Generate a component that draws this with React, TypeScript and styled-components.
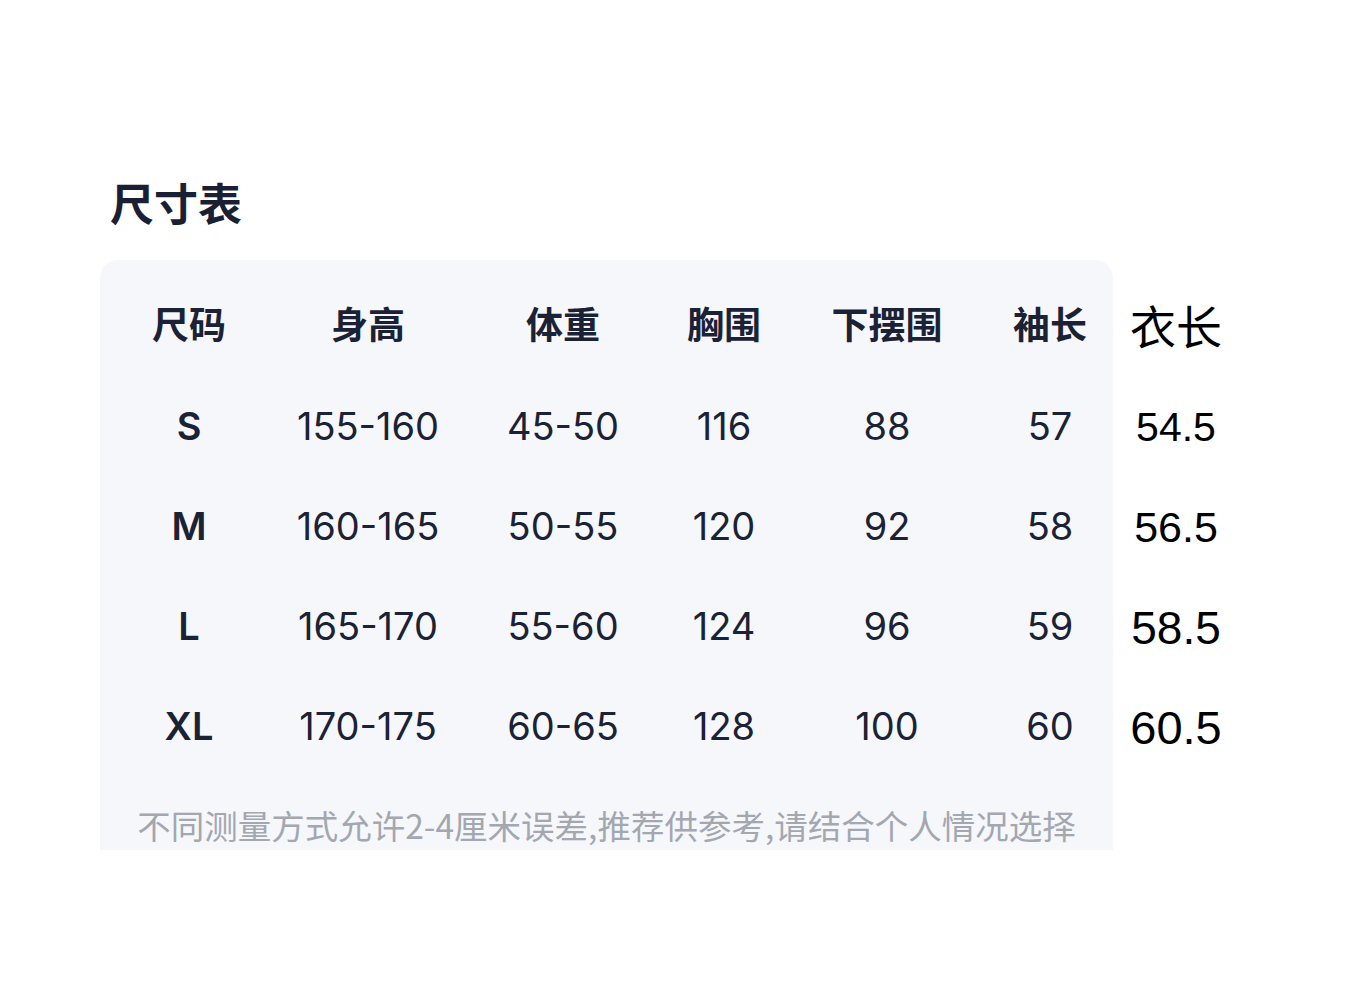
import React from "react";
import styled, { createGlobalStyle } from "styled-components";

const Global = createGlobalStyle`
  html, body { margin: 0; padding: 0; background: #ffffff; }
  body { font-family: "Noto Sans CJK SC", "Noto Sans", sans-serif; }
`;

const Page = styled.div`
  padding: 176px 0 0 100px;
  width: 1360px;
  height: 1004px;
  box-sizing: border-box;
`;

const Title = styled.h1`
  margin: 0 0 32px 10px;
  font-size: 44px;
  line-height: 52px;
  font-weight: 600;
  color: #1a1f33;
  font-family: "Noto Sans CJK SC", sans-serif;
`;

const Chart = styled.div`
  display: flex;
  align-items: flex-start;
`;

const Card = styled.div`
  width: 1013px;
  background: #f5f7fa;
  border-radius: 18px 18px 0 0;
  padding: 13px 0 5px;
  box-sizing: border-box;
`;

const Grid = styled.div`
  display: grid;
  grid-template-columns: 178px 180px 210px 112px 214px 112px;
  grid-auto-rows: 100px;
`;

const Cell = styled.div<{ $head?: boolean; $bold?: boolean }>`
  display: flex;
  align-items: center;
  justify-content: center;
  white-space: nowrap;
  box-sizing: border-box;
  padding-top: ${(p) => (p.$head ? 0 : 5)}px;
  color: #1c2235;
  font-family: "Inter", "Noto Sans CJK SC", sans-serif;
  font-size: ${(p) => (p.$head ? "37px" : "38px")};
  font-weight: ${(p) => (p.$head || p.$bold ? 600 : 400)};
`;

const Note = styled.div`
  margin-top: 32px;
  line-height: 40px;
  text-align: center;
  font-size: 33.5px;
  color: #a3a7b0;
  white-space: nowrap;
  font-family: "Noto Sans CJK SC", sans-serif;
`;

const Extra = styled.div`
  width: 126px;
  padding-top: 14px;
  display: flex;
  flex-direction: column;
`;

const ExtraCell = styled.div<{ $size: number; $num?: boolean }>`
  height: 100px;
  box-sizing: border-box;
  padding-top: ${(p) => (p.$num ? 7 : 0)}px;
  display: flex;
  align-items: center;
  justify-content: center;
  color: #000000;
  font-family: "Liberation Sans", "Noto Sans CJK SC", sans-serif;
  font-size: ${(p) => p.$size}px;
`;

const headers = ["尺码", "身高", "体重", "胸围", "下摆围", "袖长"];
const rows = [
  ["S", "155-160", "45-50", "116", "88", "57"],
  ["M", "160-165", "50-55", "120", "92", "58"],
  ["L", "165-170", "55-60", "124", "96", "59"],
  ["XL", "170-175", "60-65", "128", "100", "60"],
];
const extra: { t: string; s: number }[] = [
  { t: "衣长", s: 46 },
  { t: "54.5", s: 41 },
  { t: "56.5", s: 43 },
  { t: "58.5", s: 46 },
  { t: "60.5", s: 47 },
];

export default function App() {
  return (
    <>
      <Global />
      <Page>
        <Title>尺寸表</Title>
        <Chart>
          <Card>
            <Grid>
              {headers.map((h) => (
                <Cell key={h} $head>
                  {h}
                </Cell>
              ))}
              {rows.map((r) =>
                r.map((v, i) => (
                  <Cell key={r[0] + i} $bold={i === 0}>
                    {v}
                  </Cell>
                ))
              )}
            </Grid>
            <Note>不同测量方式允许2-4厘米误差,推荐供参考,请结合个人情况选择</Note>
          </Card>
          <Extra>
            {extra.map((e, i) => (
              <ExtraCell key={e.t} $size={e.s} $num={i > 0}>
                {e.t}
              </ExtraCell>
            ))}
          </Extra>
        </Chart>
      </Page>
    </>
  );
}
